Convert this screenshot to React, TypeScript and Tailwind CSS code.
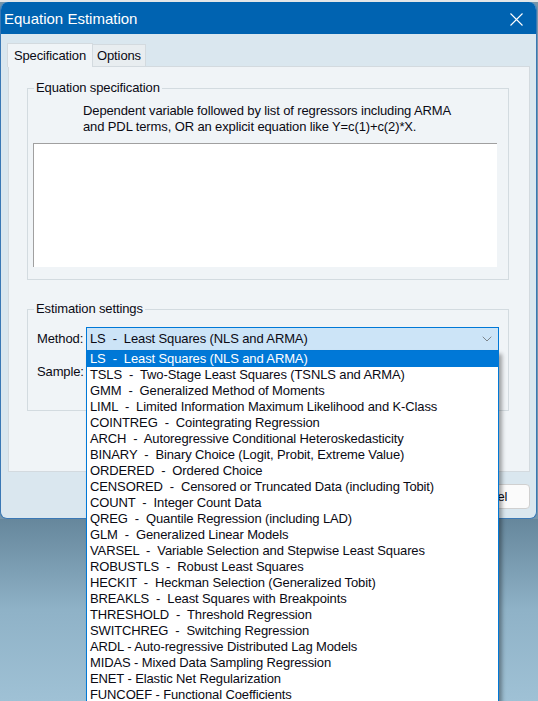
import { ChevronDown } from "lucide-react";

const methods = [
  "LS  -  Least Squares (NLS and ARMA)",
  "TSLS  -  Two-Stage Least Squares (TSNLS and ARMA)",
  "GMM  -  Generalized Method of Moments",
  "LIML  -  Limited Information Maximum Likelihood and K-Class",
  "COINTREG  -  Cointegrating Regression",
  "ARCH  -  Autoregressive Conditional Heteroskedasticity",
  "BINARY  -  Binary Choice (Logit, Probit, Extreme Value)",
  "ORDERED  -  Ordered Choice",
  "CENSORED  -  Censored or Truncated Data (including Tobit)",
  "COUNT  -  Integer Count Data",
  "QREG  -  Quantile Regression (including LAD)",
  "GLM  -  Generalized Linear Models",
  "VARSEL  -  Variable Selection and Stepwise Least Squares",
  "ROBUSTLS  -  Robust Least Squares",
  "HECKIT  -  Heckman Selection (Generalized Tobit)",
  "BREAKLS  -  Least Squares with Breakpoints",
  "THRESHOLD  -  Threshold Regression",
  "SWITCHREG  -  Switching Regression",
  "ARDL - Auto-regressive Distributed Lag Models",
  "MIDAS - Mixed Data Sampling Regression",
  "ENET - Elastic Net Regularization",
  "FUNCOEF - Functional Coefficients",
];

export default function App() {
  return (
    <div className="relative w-[538px] h-[701px] overflow-hidden bg-[#7595aa] font-['Liberation_Sans',Arial,sans-serif] text-[13px] leading-[16px] tracking-[-0.12px] text-[#0a0a14] flex flex-col">
      {/* strip of whatever is behind the dialog */}
      <div className="h-[2px] bg-[#e3e6e8]" />

      {/* Dialog window */}
      <div className="w-[537px] h-[517px] rounded-t-[8px] rounded-b-[7px] overflow-hidden bg-[#dae7ef] border-x border-b border-[#3a78b5] flex flex-col">
        {/* Title bar */}
        <div className="h-[32px] -mx-px bg-[#0063b1] flex items-center justify-between pl-[4px] pr-[14px]">
          <span className="text-white text-[15px] leading-[18px] tracking-normal mt-[2px]">Equation Estimation</span>
          <svg width="13" height="13" viewBox="0 0 13 13" className="mt-[2px]">
            <path d="M0.5 0.5 L12.5 12.5 M12.5 0.5 L0.5 12.5" stroke="white" strokeWidth="1.1" fill="none" />
          </svg>
        </div>

        {/* Tabs */}
        <div className="mt-[8px] ml-[6px] h-[24px] flex items-end">
          <div className="h-[24px] w-[86px] bg-[#f0f4f7] border-x border-t border-[#d3dadf] flex items-center justify-center relative z-10 -mb-px">
            Specification
          </div>
          <div className="h-[22px] w-[53px] bg-[#e8edf0] border-r border-t border-[#d3dadf] flex items-center justify-center">
            Options
          </div>
        </div>

        {/* Tab panel */}
        <div className="ml-[7px] w-[522px] h-[406px] bg-[#f0f4f7] border border-[#d3dadf] pt-[13px] pl-[18px]">
          <fieldset className="w-[482px] border border-[#d3dbe0] pb-[12px]">
            <legend className="ml-[6px] px-[2px]">Equation specification</legend>
            <div className="mt-[7px] pl-[55px]">
              <div>Dependent variable followed by list of regressors including ARMA</div>
              <div>and PDL terms, OR an explicit equation like Y=c(1)+c(2)*X.</div>
            </div>
            <div className="mt-[8px] ml-[5px] w-[464px] h-[124px] bg-white border-l border-t border-[#a0a0a0]" />
          </fieldset>

          <fieldset className="mt-[21px] w-[482px] h-[110px] border border-[#d3dbe0]">
            <legend className="ml-[6px] px-[2px]">Estimation settings</legend>
            <div className="mt-[10px] pl-[9px] flex items-center">
              <span className="w-[49px]">Method:</span>
              <div className="w-[413px] h-[24px] bg-[#cce4f7] border border-[#0078d7] flex items-center justify-between pl-[3px] pr-[3px]">
                <span className="whitespace-pre">{methods[0]}</span>
                <ChevronDown size={16} strokeWidth={1} className="text-[#555]" />
              </div>
            </div>
            <div className="mt-[9px] pl-[9px] h-[24px] flex items-center">
              <span className="w-[49px]">Sample:</span>
            </div>
          </fieldset>
        </div>

        {/* Buttons */}
        <div className="mt-[12px] flex justify-end pr-[6px]">
          <div className="w-[85px] h-[25px] bg-[#fbfbfb] border border-[#d0d0d0] rounded-[4px] flex items-center justify-center">
            Cancel
          </div>
        </div>
      </div>

      {/* desktop under the dialog */}
      <div className="flex-1 bg-gradient-to-b from-[#66879c] via-[#8fb2c7] to-[#9fc1d5]" />

      {/* Open method list */}
      <div className="absolute left-[86px] top-[351px] w-[413px] bg-white border-x border-b border-[#0078d7] shadow-[3px_3px_4px_rgba(0,0,0,0.35)]">
        {methods.map((m, i) => (
          <div
            key={m}
            className={`h-[16px] pl-[3px] whitespace-pre ${
              i === 0 ? "bg-[#0078d7] text-white" : ""
            }`}
          >
            {m}
          </div>
        ))}
      </div>
    </div>
  );
}
